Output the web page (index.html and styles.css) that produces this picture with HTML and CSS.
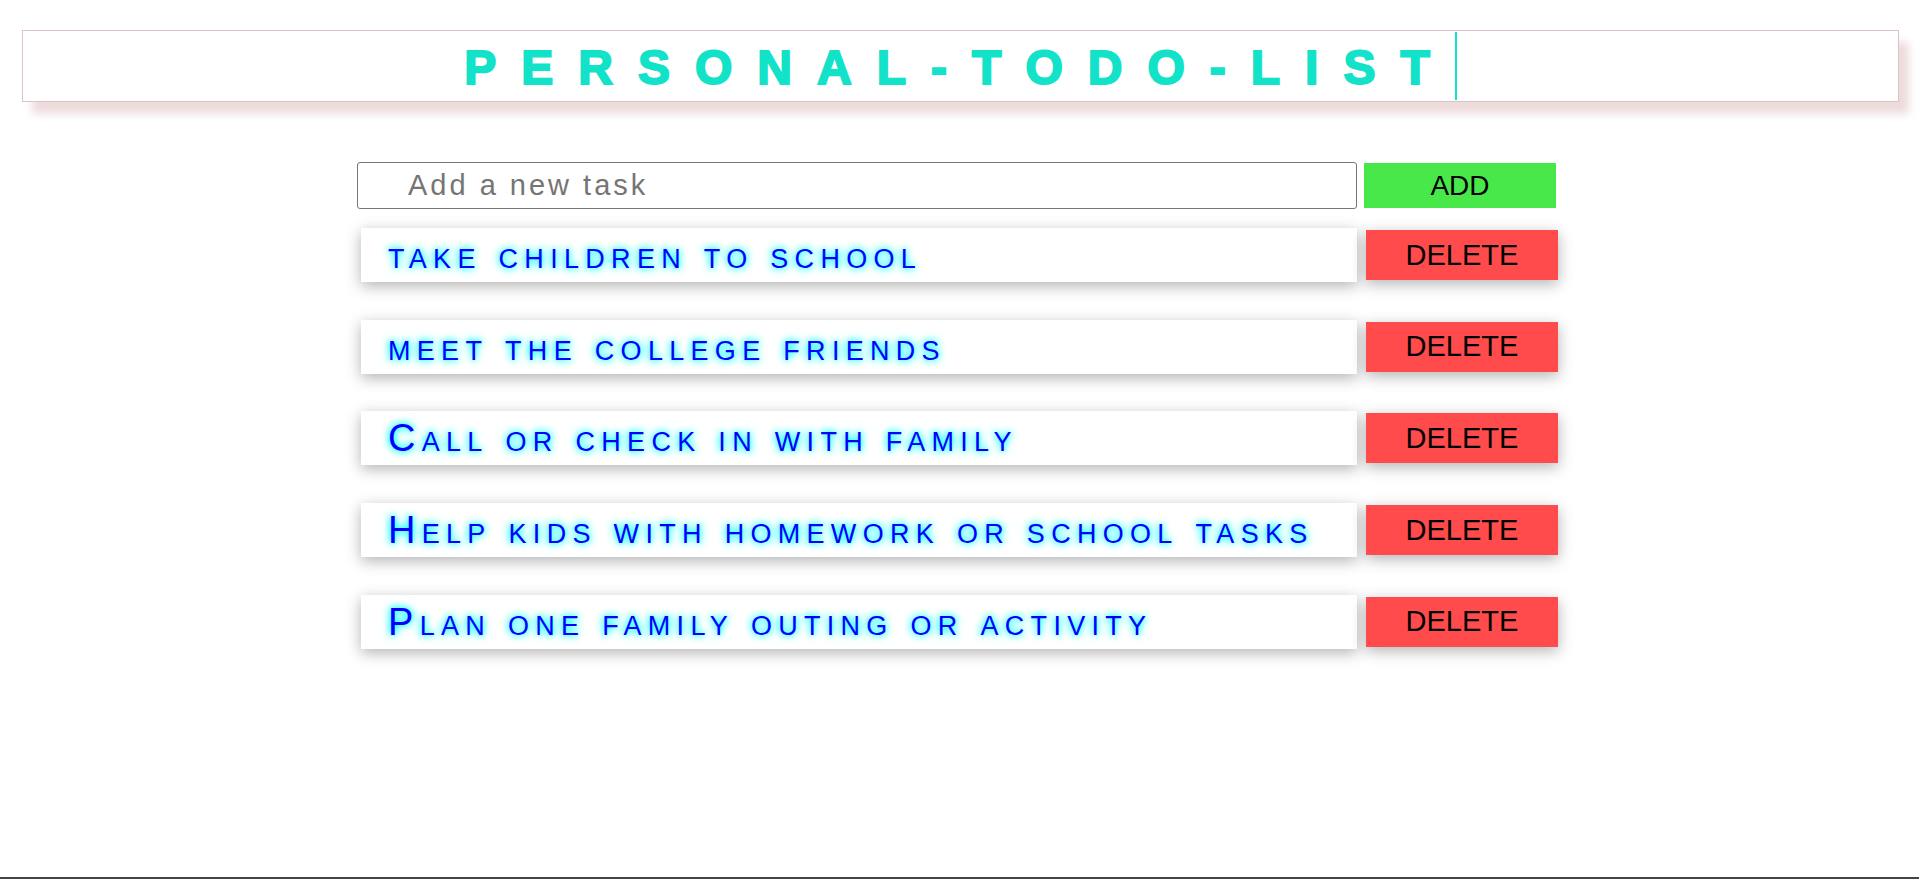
FILE: index.html
```html
<!DOCTYPE html>
<html lang="en">
<head>
<meta charset="utf-8">
<title>Personal Todo List</title>
<link rel="stylesheet" href="styles.css">
</head>
<body>
  <header class="topbar">
    <h1 class="title">PERSONAL-TODO-LIST</h1>
  </header>
  <main class="app">
    <form class="add-row">
      <input class="task-input" type="text" placeholder="Add a new task">
      <button class="add-btn" type="button">ADD</button>
    </form>
    <ul class="tasks">
      <li class="task"><div class="task-text">take children to school</div><button class="del-btn" type="button">DELETE</button></li>
      <li class="task"><div class="task-text">meet the college friends</div><button class="del-btn" type="button">DELETE</button></li>
      <li class="task"><div class="task-text">Call or check in with family</div><button class="del-btn" type="button">DELETE</button></li>
      <li class="task"><div class="task-text">Help kids with homework or school tasks</div><button class="del-btn" type="button">DELETE</button></li>
      <li class="task"><div class="task-text">Plan one family outing or activity</div><button class="del-btn" type="button">DELETE</button></li>
    </ul>
  </main>
</body>
</html>
```
FILE: styles.css
```css
html, body {
  margin: 0;
  padding: 0;
}
body {
  min-height: 100vh;
  box-sizing: border-box;
  border-bottom: 2px solid #444;
  background: #fff;
  font-family: "Liberation Sans", Arial, sans-serif;
}
.topbar {
  margin: 30px 20px 0 22px;
  height: 72px;
  box-sizing: border-box;
  border: 1px solid #dcc3c3;
  background: #fff;
  box-shadow: 10px 12px 8px #eedcdd;
  text-align: center;
}
.title {
  display: inline-block;
  margin: 1px 0 0 0;
  height: 68px;
  box-sizing: border-box;
  padding-top: 3px;
  font-family: "Liberation Sans", Arial, sans-serif;
  font-weight: bold;
  font-size: 48px;
  line-height: 65px;
  letter-spacing: 25px;
  color: #12e2c8;
  border-right: 2px solid #12e2c8;
  -webkit-text-stroke: 2px #12e2c8;
}
.app {
  margin-top: 60px;
}
.add-row {
  display: flex;
  justify-content: center;
  align-items: flex-start;
  gap: 7px;
  padding-right: 6px;
  margin: 0;
}
.task-input {
  width: 1000px;
  height: 47px;
  box-sizing: border-box;
  border: 1px solid #767676;
  border-radius: 3px;
  padding: 0 0 0 50px;
  font-family: "Liberation Sans", Arial, sans-serif;
  font-size: 29px;
  letter-spacing: 3px;
  color: #333;
  outline: none;
}
.task-input::placeholder {
  color: #757575;
}
.add-btn {
  margin-top: 1px;
  width: 192px;
  height: 45px;
  border: none;
  background: #48e84a;
  font-family: "Liberation Sans", Arial, sans-serif;
  font-size: 28px;
  color: #000;
  padding: 0;
}
.tasks {
  list-style: none;
  margin: 19px 0 0 0;
  padding: 0;
}
.task {
  display: flex;
  justify-content: center;
  align-items: center;
  gap: 9px;
  margin-bottom: 37.7px;
}
.task-text {
  width: 996px;
  height: 54px;
  box-sizing: border-box;
  padding: 1px 0 0 27px;
  display: flex;
  align-items: center;
  background: #fff;
  box-shadow: 0 4px 14px rgba(0, 0, 0, 0.3);
  font-family: "Liberation Sans", Arial, sans-serif;
  font-variant: small-caps;
  font-size: 38px;
  letter-spacing: 6.3px;
  color: #0000ff;
  text-shadow: 0 0 6px #00ffff, 0 0 10px #00ffff;
}
.del-btn {
  width: 192px;
  height: 50px;
  border: none;
  padding: 0;
  background: #ff4b4b;
  font-family: "Liberation Sans", Arial, sans-serif;
  font-size: 29px;
  color: #000;
  box-shadow: 0 4px 14px rgba(0, 0, 0, 0.3);
}
```
